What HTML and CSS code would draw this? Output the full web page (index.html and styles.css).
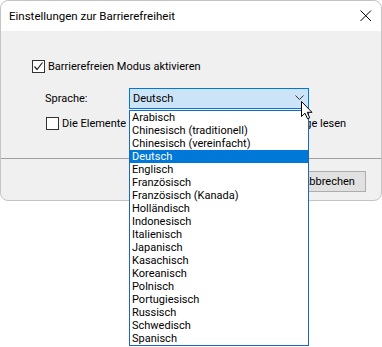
FILE: index.html
```html
<!DOCTYPE html>
<html lang="de">
<head>
<meta charset="utf-8">
<title>Einstellungen zur Barrierefreiheit</title>
<link rel="stylesheet" href="styles.css">
</head>
<body>
<div class="window">
  <div class="titlebar">
    <span class="title">Einstellungen zur Barrierefreiheit</span>
    <svg class="close" width="12" height="12" viewBox="0 0 12 12"><path d="M0.5 0.5 L11 11 M11 0.5 L0.5 11" stroke="#000" stroke-width="1" fill="none"/></svg>
  </div>
  <div class="content">
    <label class="check first">
      <span class="box checked"><svg width="11" height="11" viewBox="0 0 11 11"><path d="M1.5 5.5 L4 8.5 L9.5 1.5" stroke="#222" stroke-width="1.2" fill="none"/></svg></span>
      <span>Barrierefreien Modus aktivieren</span>
    </label>
    <div class="lang-row">
      <span class="lang-label">Sprache:</span>
      <div class="combo">
        <span>Deutsch</span>
        <svg class="chev" width="9" height="6" viewBox="0 0 9 6"><path d="M0.5 0.5 L4.5 4.5 L8.5 0.5" stroke="#333" stroke-width="1" fill="none"/></svg>
      </div>
    </div>
    <label class="check second">
      <span class="box"></span>
      <span>Die Elemente a<span class="covered">uf der Seite in der Anzeigereihenfol</span>ge lesen</span>
    </label>
  </div>
  <div class="footer">
    <button class="btn">OK</button>
    <button class="btn">Abbrechen</button>
  </div>
  <ul class="dropdown">
    <li>Arabisch</li>
    <li>Chinesisch (traditionell)</li>
    <li>Chinesisch (vereinfacht)</li>
    <li class="selected">Deutsch</li>
    <li>Englisch</li>
    <li>Französisch</li>
    <li>Französisch (Kanada)</li>
    <li>Holländisch</li>
    <li>Indonesisch</li>
    <li>Italienisch</li>
    <li>Japanisch</li>
    <li>Kasachisch</li>
    <li>Koreanisch</li>
    <li>Polnisch</li>
    <li>Portugiesisch</li>
    <li>Russisch</li>
    <li>Schwedisch</li>
    <li>Spanisch</li>
  </ul>
  <svg class="cursor" width="13" height="19" viewBox="0 0 13 19"><path d="M0.5 0.5 L0.5 15.5 L4 12.2 L6.5 17.8 L8.7 16.8 L6.3 11.3 L11 11.3 Z" fill="#fff" stroke="#000" stroke-width="1" stroke-linejoin="miter"/></svg>
</div>
</body>
</html>
```

FILE: styles.css
```css
* { box-sizing: border-box; }
html, body { margin: 0; padding: 0; background: #fff; }
body {
  font-family: "Roboto", "Noto Sans", sans-serif;
  font-size: 11px;
  color: #000;
  width: 382px;
  height: 347px;
  overflow: hidden;
}
.window {
  position: relative;
  width: 382px;
  height: 201px;
  border: 1px solid #c4c4c4;
  border-radius: 8px;
  background: #f0f0f0;
}
.titlebar {
  height: 30px;
  background: #fff;
  border-radius: 8px 8px 0 0;
  display: flex;
  align-items: center;
  justify-content: space-between;
  padding: 0 9px 0 8px;
}
.title { font-size: 11.5px; }
.close { display: block; margin-top: -1px; }
.content {
  height: 128px;
  padding: 29px 0 0 31px;
  border-bottom: 1px solid #a0a0a0;
}
.check {
  display: flex;
  align-items: center;
  gap: 3px;
  height: 13px;
  line-height: 13px;
  white-space: nowrap;
}
.box {
  flex: 0 0 13px;
  width: 13px;
  height: 13px;
  border: 1px solid #333;
  background: #fff;
  display: flex;
  align-items: center;
  justify-content: center;
}
.covered { visibility: hidden; }
.lang-row {
  display: flex;
  align-items: center;
  margin: 15px 0 0 13px;
  height: 21px;
}
.lang-label { width: 84px; }
.combo {
  width: 180px;
  height: 21px;
  border: 1px solid #0078d7;
  background: #cce4f7;
  display: flex;
  align-items: center;
  justify-content: space-between;
  padding: 0 4px 0 3px;
}
.chev { margin-top: -1px; }
.second { margin: 8px 0 0 14px; }
.footer {
  display: flex;
  justify-content: flex-end;
  gap: 8px;
  padding: 12px 15px 0 0;
}
.btn {
  width: 75px;
  height: 21px;
  border: 1px solid #adadad;
  background: #e1e1e1;
  font-family: inherit;
  font-size: 11px;
  padding: 0;
  color: #000;
}
.dropdown {
  position: absolute;
  left: 128px;
  top: 109px;
  width: 180px;
  margin: 0;
  padding: 0;
  list-style: none;
  background: #fff;
  border: 1px solid #1a66c2;
}
.dropdown li {
  height: 13px;
  line-height: 13px;
  padding-left: 2px;
  white-space: nowrap;
}
.dropdown li.selected { background: #0078d7; color: #fff; }
.cursor {
  position: absolute;
  left: 300px;
  top: 100px;
}
```
